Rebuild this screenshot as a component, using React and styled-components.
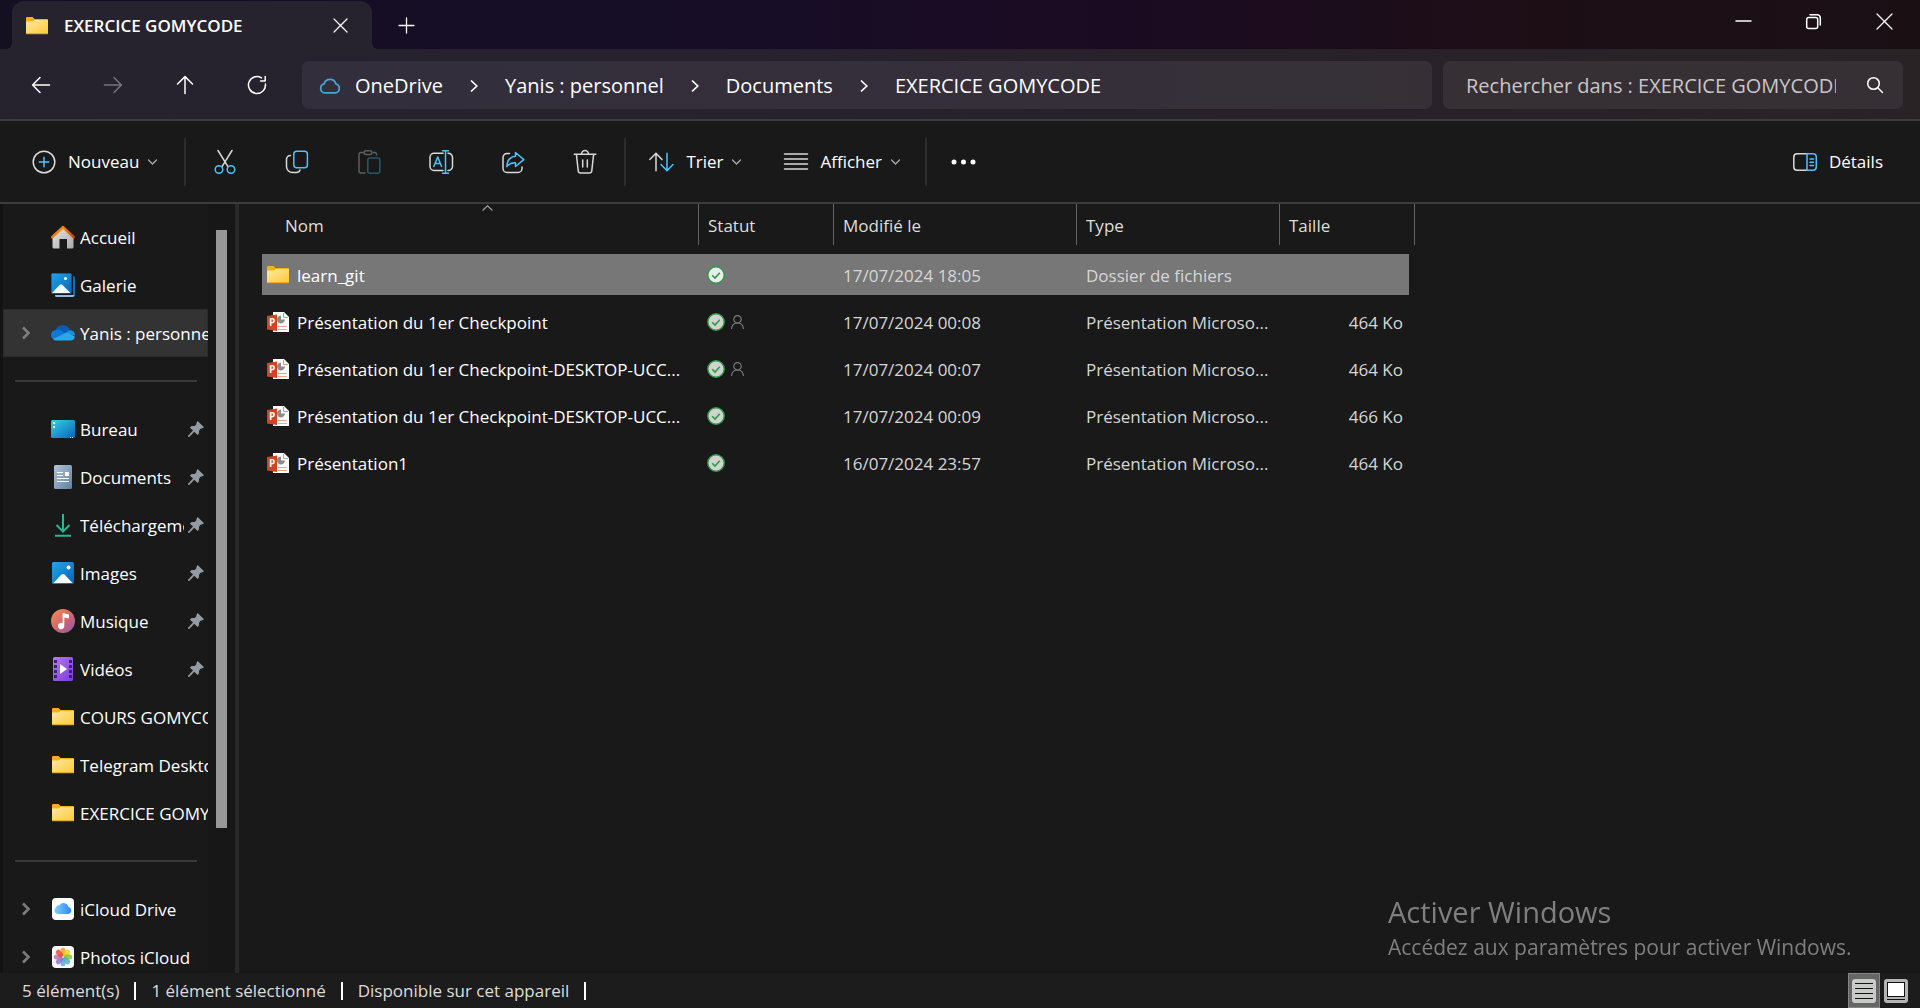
import React from "react";
import styled, { createGlobalStyle, css } from "styled-components";

const Global = createGlobalStyle`
  *, *::before, *::after { box-sizing: border-box; }
  body {
    margin: 0;
    background: #191919;
    color: #fff;
    font: 17px/24px "Open Sans", "Noto Sans", sans-serif;
  }
  button, input { font: inherit; color: inherit; border: 0; background: none; padding: 0; margin: 0; }
  button { display: inline-flex; align-items: center; justify-content: center; white-space: nowrap; }
  svg { display: block; flex: none; overflow: visible; }
`;

const BLUE = "#4cc2ff";
const LIGHT = "#d9d9d9";

/* ---------- window frame ---------- */

const Window = styled.div`
  height: 100vh;
  display: flex;
  flex-direction: column;
  overflow: hidden;
`;

const TitleBar = styled.header`
  flex: none;
  display: flex;
  height: 49px;
  padding: 1px 0 0 12px;
  background: linear-gradient(90deg, #150f22, #160d27 35%, #1b0b22 58%, #1d0e16 80%, #1a1014);
`;

const Tab = styled.div`
  position: relative;
  display: flex;
  align-items: center;
  width: 360px;
  padding: 1px 19px 0 14px;
  gap: 16px;
  border-radius: 12px 12px 0 0;
  background: #26222e;
  font-size: 17px;
  font-weight: 600;

  &::before, &::after {
    content: "";
    position: absolute;
    bottom: 0;
    width: 6px;
    height: 6px;
  }
  &::before { left: -6px; background: radial-gradient(circle at 0 0, transparent 6px, #26222e 6px); }
  &::after { right: -6px; background: radial-gradient(circle at 100% 0, transparent 6px, #26222e 6px); }
`;

const TabTitle = styled.span`
  flex: 1;
  white-space: nowrap;
`;

const GlyphButton = styled.button`
  width: ${(p) => p.$width || 26}px;
  height: ${(p) => (p.$height ? p.$height + "px" : "auto")};
`;

const NewTab = styled(GlyphButton)`
  margin-left: 17px;
`;

const Captions = styled.div`
  display: flex;
  height: 40px;
  margin-left: auto;
`;

/* ---------- navigation ---------- */

const NavBar = styled.div`
  flex: none;
  display: flex;
  align-items: center;
  height: 72px;
  padding: 2px 17px 0 5px;
  border-bottom: 2px solid #3d3b3f;
  background: linear-gradient(90deg, #26222e, #27222d 45%, #282129 70%, #2a2326);
`;

const Address = styled.nav`
  flex: 1;
  display: flex;
  align-items: center;
  height: 48px;
  margin-left: 9px;
  padding: 2px 0 0 17px;
  border-radius: 7px;
  background: linear-gradient(90deg, #322e3b, #352f3a 70%, #363036);
  font-size: 20px;
`;

const Crumb = styled.a`
  color: #fff;
  text-decoration: none;
  white-space: nowrap;
`;

const CrumbArrow = styled.svg`
  margin: 0 27px;
`;

const CloudSlot = styled.span`
  width: 36px;
`;

const Search = styled.label`
  display: flex;
  align-items: center;
  justify-content: space-between;
  width: 460px;
  height: 48px;
  margin-left: 11px;
  padding: 0 20px 0 23px;
  border-radius: 7px;
  background: #362f34;
`;

const SearchInput = styled.input`
  width: 370px;
  height: 32px;
  font-size: 20px;
  outline: 0;
  &::placeholder { color: #c9c6c9; opacity: 1; }
`;

/* ---------- command bar ---------- */

const CommandBar = styled.div`
  flex: none;
  display: flex;
  align-items: center;
  height: 83px;
  padding: 0 37px 0 32px;
  border-bottom: 2px solid #3c3c3c;
  background: #191919;
`;

const Command = styled.button`
  gap: 12px;
`;

const Label = styled.span`
  margin-right: ${(p) => (p.$last ? 0 : -3)}px;
  padding-top: 1px;
`;

const Divider = styled.span`
  width: 2px;
  height: 48px;
  margin: 0 ${(p) => p.$right}px 0 ${(p) => p.$left}px;
  background: #2d2d2d;
`;

const IconCommand = styled.button`
  width: 72px;
  height: 48px;
`;

const Spacer = styled.span`
  flex: ${(p) => (p.$width ? "none" : 1)};
  width: ${(p) => p.$width || 0}px;
`;

/* ---------- side panel ---------- */

const Body = styled.div`
  flex: 1;
  display: flex;
  min-height: 0;
`;

const SidePanel = styled.aside`
  flex: none;
  display: grid;
  grid-template-columns: 205px 27px;
  width: 239px;
  border-left: 3px solid #131313;
  border-right: 4px solid #292929;
  background: #171717;
`;

const Places = styled.nav`
  overflow: hidden;
  padding-top: 9px;
  background: #191919;
`;

const Place = styled.a`
  display: grid;
  grid-template-columns: 48px 24px 1fr auto;
  align-items: center;
  height: 48px;
  color: #fff;
  text-decoration: none;
  white-space: nowrap;
  ${(p) => p.$active && css`
    background: #333;
    box-shadow: inset 0 0 0 1px #2b2b2b;
  `}
`;

const PlaceArrow = styled.span`
  padding-left: 18px;
`;

const PlaceIcon = styled.span`
  display: flex;
  justify-content: center;
`;

const PlaceName = styled.span`
  overflow: hidden;
  margin-left: 5px;
  padding-top: 1px;
`;

const PinSlot = styled.span`
  padding: 0 4px;
`;

const Rule = styled.hr`
  height: 48px;
  margin: 0 11px 0 12px;
  border: 0;
  background: linear-gradient(#3a3a3a, #3a3a3a) center / 100% 2px no-repeat;
`;

const Track = styled.div`
  display: grid;
  grid-template-rows: 26px 598fr 145fr;
  padding: 0 8px;
`;

const Thumb = styled.div`
  grid-row: 2;
  background: #979797;
`;

/* ---------- file list ---------- */

const Content = styled.main`
  flex: 1;
  min-width: 0;
  padding-left: 23px;
`;

const Files = styled.table`
  width: 1153px;
  table-layout: fixed;
  border-collapse: separate;
  border-spacing: 0;
`;

const Col = styled.col`
  width: ${(p) => p.$width}px;
`;

const HeadCell = styled.th`
  position: relative;
  height: 47px;
  padding: 0;
  vertical-align: top;
  font-weight: 400;
`;

const HeadButton = styled.button`
  justify-content: flex-start;
  width: 100%;
  height: 41px;
  padding: 2px 0 0 ${(p) => (p.$first ? 23 : 9)}px;
  border-right: 1px solid #636363;
  color: #dedede;
`;

const SortMark = styled.svg`
  position: absolute;
  top: 1px;
  left: calc(50% + 1px);
`;

const Cell = styled.td`
  height: 47px;
  padding: ${(p) => (p.$icons ? 0 : 3)}px 6px 0 ${(p) => p.$left || 9}px;
  border: solid transparent;
  border-width: 3px 0;
  background-clip: padding-box;
  color: #d6d6d6;
  text-align: ${(p) => (p.$right ? "right" : "left")};
  white-space: nowrap;
  overflow: hidden;
`;

const Row = styled.tr`
  ${(p) => p.$selected && css`
    ${Cell} { background-color: #777; }
  `}
`;

const NameBox = styled.span`
  display: flex;
  align-items: center;
  gap: 8px;
  color: #fff;
`;

const FileName = styled.span`
  padding-top: 3px;
`;

const StatusBox = styled.span`
  display: flex;
  align-items: center;
  gap: 6px;
`;

/* ---------- bottom ---------- */

const StatusBar = styled.footer`
  flex: none;
  display: flex;
  align-items: center;
  height: 35px;
  padding: 0 8px 0 22px;
  background: #1c1c1c;
  color: #dcdcdc;
`;

const StatusItem = styled.span`
  margin-right: 15px;
  padding-right: 15px;
  line-height: 18px;
  border-right: 2px solid #fff;
`;

const ViewButton = styled.button`
  width: 32px;
  height: 35px;
  ${(p) => p.$on && css`
    background: #666;
    border: 1px solid #858585;
  `}
`;

const Watermark = styled.div`
  position: fixed;
  right: 68px;
  bottom: 46px;
  width: 464px;
  color: #7f7f7f;
  font-size: 21px;
  line-height: 30px;
  white-space: nowrap;
  pointer-events: none;
`;

const WatermarkTitle = styled.div`
  font-size: 29px;
  line-height: 40px;
`;

/* ---------- drawings ---------- */

const Stroke = ({ w = 24, h = 24, color = LIGHT, sw = 1.5, children }) => (
  <svg width={w} height={h} viewBox={`0 0 ${w} ${h}`} fill="none" stroke={color} strokeWidth={sw} strokeLinecap="round" strokeLinejoin="round" aria-hidden="true">
    {children}
  </svg>
);

const Folder = () => (
  <svg width="22" height="18" viewBox="0 0 22 18" aria-hidden="true">
    <defs>
      <linearGradient id="folder" x1="0" y1="0" x2="1" y2="1">
        <stop offset="0" stopColor="#ffe9a2" />
        <stop offset="1" stopColor="#ffc937" />
      </linearGradient>
    </defs>
    <path d="M0 1.2Q0 0 1.2 0H6.5L8.5 2H21Q22 2 22 3V16H0Z" fill="#f6b01a" />
    <path d="M0 4.4H7L8.6 3H22V16.4Q22 17 21.3 17H.7Q0 17 0 16.4Z" fill="url(#folder)" />
    <path d="M0 16.3H22V16.6Q22 17.3 21.3 17.3H.7Q0 17.3 0 16.6Z" fill="#dd9f1c" />
  </svg>
);

const ChevronDown = () => (
  <Stroke w={9} h={6} color="#b0b0b0" sw={1.2}><path d="M.5 1 4.5 5 8.5 1" /></Stroke>
);

const Close = ({ size = 13 }) => (
  <Stroke w={size} h={size} color="#fff" sw={1.3}><path d={`M0 0 ${size} ${size}M${size} 0 0 ${size}`} /></Stroke>
);

const ArrowLeft = () => <Stroke w={18} h={16} color="#fff"><path d="M17.5 8H.8M8 .5.6 8 8 15.5" /></Stroke>;
const ArrowRight = () => <Stroke w={18} h={16} color="#77747d"><path d="M.5 8H17.2M10 .5 17.4 8 10 15.5" /></Stroke>;
const ArrowUp = () => <Stroke w={16} h={18} color="#fff"><path d="M8 17.5V.8M.5 8 8 .6 15.5 8" /></Stroke>;
const Refresh = () => (
  <Stroke w={18} h={18} color="#fff"><path d="M13.5 1.8A8.5 8.5 0 1 0 17.4 8M17.2.6V5H12.6" /></Stroke>
);

const CloudLine = () => (
  <Stroke w={22} h={16} color="#4aa3d6" sw={1.7}>
    <path d="M5.5 14.8A4.6 4.6 0 0 1 5.2 5.8 6 6 0 0 1 16.8 5.8 4.6 4.6 0 0 1 16.5 14.8Z" />
  </Stroke>
);

const PlusCircle = () => (
  <Stroke><circle cx="12" cy="12" r="10.8" /><path d="M12 7.2V16.8M7.2 12H16.8" stroke={BLUE} /></Stroke>
);
const Cut = () => (
  <Stroke>
    <path d="M5 .5 14.8 16.4M19 .5 9.2 16.4" />
    <g stroke={BLUE}><circle cx="6" cy="19.5" r="3.8" /><circle cx="18" cy="19.5" r="3.8" /></g>
  </Stroke>
);
const Copy = () => (
  <Stroke>
    <path d="M5.5 5.4A4 4 0 0 0 1.5 9.3V16.5A6 6 0 0 0 7.5 22.5H11.5A3.6 3.6 0 0 0 15 20" />
    <rect x="8.8" y="1.2" width="13.6" height="16.6" rx="3" stroke={BLUE} />
  </Stroke>
);
const Paste = () => (
  <Stroke color="#5d5d5d">
    <path d="M6.5 2.4H4A2 2 0 0 0 2 4.4V21A2 2 0 0 0 4 23H8M16 2.4H18A2 2 0 0 1 19.5 4V5" />
    <rect x="7" y=".8" width="8" height="3.6" rx="1.8" />
    <rect x="10.8" y="8" width="12" height="15.2" rx="2" stroke="#27566d" />
  </Stroke>
);
const Rename = () => (
  <Stroke>
    <path d="M14 3.3H5A4 4 0 0 0 1 7.3V16.5A4 4 0 0 0 5 20.5H14M19 3.3A4.2 4.2 0 0 1 23.5 7.3V16.5A4.2 4.2 0 0 1 19 20.5" />
    <g stroke={BLUE}><path d="M16.5 .8V23.2M13.5 .8H19.5M13.5 23.2H19.5M4.8 16.5 8.7 7 12.6 16.5M6.2 13.4H11.2" /></g>
  </Stroke>
);
const Share = () => (
  <Stroke>
    <path d="M8.5 3.5H6A4 4 0 0 0 2 7.5V18.5A4 4 0 0 0 6 22.5H17A4 4 0 0 0 21 18.5V17" />
    <path d="M14.5 2.5 22.8 9.6 14.5 16.5V12.8C10.5 12.5 8 13.8 5.8 16.6 6.2 11 8.8 6.6 14.5 6.2Z" stroke={BLUE} />
  </Stroke>
);
const Trash = () => (
  <Stroke>
    <path d="M1.2 4.3H22.8M8.6 4A3.4 3.4 0 0 1 15.4 4M3.4 4.5 5.2 20.7A2.5 2.5 0 0 0 7.7 23H16.3A2.5 2.5 0 0 0 18.8 20.7L20.6 4.5M9.7 10V17M14.3 10V17" />
  </Stroke>
);
const Sort = () => (
  <Stroke w={25} h={20}>
    <path d="M7 18.8V1.2M.8 7.5 7 1.2 13 7.5" />
    <path d="M18 1.2V18.8M12 12.5 18 18.8 24 12.5" stroke={BLUE} />
  </Stroke>
);
const Lines = () => <Stroke w={24} h={17}><path d="M.5 1H23.5M.5 6H23.5M.5 11H23.5M.5 16H23.5" /></Stroke>;
const Dots = () => (
  <svg width="25" height="6" viewBox="0 0 25 6" fill="#fff" aria-hidden="true"><circle cx="3" cy="3" r="2.5" /><circle cx="12.5" cy="3" r="2.5" /><circle cx="22" cy="3" r="2.5" /></svg>
);
const DetailsPane = () => (
  <Stroke w={24} h={18}>
    <path d="M14 .8H4A3.3 3.3 0 0 0 .8 4V14A3.3 3.3 0 0 0 4 17.2H14" />
    <path d="M14 .8H20A3.3 3.3 0 0 1 23.3 4V14A3.3 3.3 0 0 1 20 17.2H14ZM17 6H20.5M17 9.2H20.5M17 12.4H20.5" stroke={BLUE} />
  </Stroke>
);

const Pin = () => (
  <svg width="16" height="16" viewBox="0 0 16 16" aria-hidden="true">
    <path d="M9.6 0 16 6.2C14.8 7.2 13.8 7.4 12.6 7.8L11 9.8C11.3 11.5 11 13 9.8 14L6.2 10.8 1.5 15.8 0 16 .3 14.5 5 9.6 1.8 6.4C3 5.2 4.5 4.8 6.2 5.2L8.4 3.4C8.5 2 8.8 1 9.6 0Z" fill="#949da4" />
  </svg>
);
const SideChevron = () => <Stroke w={10} h={14} color="#7d7d7d" sw={2.6}><path d="M2 1.5 7.5 7 2 12.5" strokeLinecap="butt" strokeLinejoin="miter" /></Stroke>;

const Home = () => (
  <svg width="24" height="24" viewBox="0 0 24 24" aria-hidden="true">
    <defs>
      <linearGradient id="wall" x1="0" y1="0" x2="1" y2="1"><stop offset="0" stopColor="#e6e6e6" /><stop offset="1" stopColor="#aaa" /></linearGradient>
      <linearGradient id="roof"><stop offset="0" stopColor="#ee7a10" /><stop offset=".5" stopColor="#f58a1a" /><stop offset="1" stopColor="#c93f06" /></linearGradient>
    </defs>
    <path d="M1.5 11 12 2 22.5 11V22Q22.5 23.5 21 23.5H16V14H8.5V23.5H3Q1.5 23.5 1.5 22Z" fill="url(#wall)" />
    <path d="M1.3 12 12 2.2 22.7 12" fill="none" stroke="url(#roof)" strokeWidth="2.6" strokeLinecap="round" strokeLinejoin="round" />
  </svg>
);
const Sky = () => (
  <linearGradient id="sky" x1="0" y1="0" x2="1" y2="1"><stop offset="0" stopColor="#22a5ea" /><stop offset="1" stopColor="#0862b8" /></linearGradient>
);
const Gallery = () => (
  <svg width="24" height="24" viewBox="0 0 24 24" aria-hidden="true">
    <defs><Sky /></defs>
    <path d="M22 3Q24 3 24 5V22Q24 24 22 24H5Q4 24 4 22H22Z" fill="#0f6cbd" />
    <path d="M4 22H23.5Q23 24 21.5 24H5.5Q4 24 4 22Z" fill="#8fbcf0" />
    <rect width="21" height="21" rx="1.5" fill="url(#sky)" stroke="#191919" strokeWidth=".8" />
    <path d="M1 20 8.5 12Q10 10.7 11.5 12L19.5 20Z" fill="#f2f9ff" />
    <circle cx="14.5" cy="5.5" r="1.6" fill="#fff" />
  </svg>
);
const Pictures = () => (
  <svg width="22" height="22" viewBox="0 0 22 22" aria-hidden="true">
    <defs><Sky /></defs>
    <rect width="22" height="22" rx="1.5" fill="url(#sky)" />
    <path d="M1.5 21 9.5 12.6Q11 11.3 12.5 12.6L20.5 21Z" fill="#fff" />
    <circle cx="16.5" cy="5.5" r="2" fill="#fff" />
  </svg>
);
const OneDrive = () => (
  <svg width="24" height="16" viewBox="0 0 24 16" aria-hidden="true">
    <path d="M4.5 5.5A7.6 7.6 0 0 1 19 5.5L13 10Z" fill="#0a5cb8" />
    <path d="M5 15A5 5 0 0 1 4.8 5 7 7 0 0 1 10 5.5L15 9 8 15Z" fill="#0f78d4" />
    <path d="M13 8.5 18.5 5.2A5 5 0 0 1 24 10.5Z" fill="#1490df" />
    <path d="M2 14 14 8.3Q16 7.5 18 8.3L23.8 11.5A4.5 4.5 0 0 1 19.5 15.5H5Q3.2 15.5 2 14Z" fill="#28a8ea" />
  </svg>
);
const Desktop = () => (
  <svg width="24" height="18" viewBox="0 0 24 18" aria-hidden="true">
    <defs><linearGradient id="desk" x1="0" y1="0" x2="1" y2="1"><stop offset="0" stopColor="#34d3e3" /><stop offset="1" stopColor="#0a63b8" /></linearGradient></defs>
    <rect width="24" height="18" rx="1.5" fill="url(#desk)" />
    <path d="M2 2H4V4H2ZM2 6H4V8H2ZM19 17H20V18H19ZM21 17H22V18H21Z" fill="#fff" />
  </svg>
);
const Documents = () => (
  <svg width="18" height="24" viewBox="0 0 18 24" aria-hidden="true">
    <defs><linearGradient id="doc" x1="0" y1="0" x2="1" y2="1"><stop offset="0" stopColor="#b3c4d8" /><stop offset="1" stopColor="#5f80a4" /></linearGradient></defs>
    <rect width="18" height="24" rx="1.5" fill="url(#doc)" />
    <path d="M3 7H9V8H3ZM3 10H9V11H3ZM3 13H15V14H3ZM3 16H15V17H3ZM11 7H15V11H11Z" fill="#fff" />
  </svg>
);
const Download = () => (
  <svg width="16" height="23" viewBox="0 0 16 23" fill="none" stroke="#27b893" strokeWidth="2" aria-hidden="true">
    <path d="M8 0V17M1.5 11 8 17.6 14.5 11M0 21.8H16" />
  </svg>
);
const Music = () => (
  <svg width="24" height="24" viewBox="0 0 24 24" aria-hidden="true">
    <defs><linearGradient id="music" x1="0" y1="0" x2="1" y2="1"><stop offset="0" stopColor="#f5924c" /><stop offset=".55" stopColor="#cf6470" /><stop offset="1" stopColor="#8d59b8" /></linearGradient></defs>
    <circle cx="12" cy="12" r="12" fill="url(#music)" />
    <path d="M11.6 4 18 5.5V9.5L13.3 8.4V17A3.2 3.2 0 1 1 11.6 14.2Z" fill="#fff" />
  </svg>
);
const Video = () => (
  <svg width="20" height="24" viewBox="0 0 20 24" aria-hidden="true">
    <defs><linearGradient id="video" x1="0" y1="0" x2="1" y2="1"><stop offset="0" stopColor="#b779f2" /><stop offset="1" stopColor="#7a3be0" /></linearGradient></defs>
    <rect width="20" height="24" rx="1.5" fill="url(#video)" />
    {[3, 8, 13, 18].map((y) => <path key={y} d={`M1 ${y}H4V${y + 3}H1ZM16 ${y}H19V${y + 3}H16Z`} fill="#3d2070" />)}
    <path d="M7 7 14 12 7 17Z" fill="#fff" />
  </svg>
);
const ICloud = () => (
  <svg width="22" height="22" viewBox="0 0 22 22" aria-hidden="true">
    <defs><linearGradient id="icloud"><stop offset="0" stopColor="#7fd0f8" /><stop offset="1" stopColor="#2f86f5" /></linearGradient></defs>
    <rect width="22" height="22" rx="4" fill="#fff" />
    <path d="M5.5 16A3.5 3.5 0 0 1 4 9.6 3.2 3.2 0 0 1 7.5 7.2 5 5 0 0 1 16.5 9 3.6 3.6 0 0 1 16.5 16Z" fill="url(#icloud)" />
  </svg>
);
const PETALS = ["#f9a01b", "#e8d51a", "#8cc63f", "#4fb9a0", "#5aa4e6", "#8a78c8", "#c472b4", "#ee4a38"];
const Photos = () => (
  <svg width="22" height="22" viewBox="0 0 22 22" aria-hidden="true">
    <rect width="22" height="22" rx="4" fill="#fafafa" />
    {PETALS.map((c, i) => <rect key={c} x="8.5" y="1.8" width="5" height="8.4" rx="2.5" fill={c} opacity=".85" transform={`rotate(${i * 45} 11 11)`} />)}
  </svg>
);

const PowerPoint = () => (
  <svg width="22" height="20" viewBox="0 0 22 20" aria-hidden="true">
    <path d="M6 0H17L22 5V20H6Z" fill="#fff" />
    <path d="M16.5 1V5.5H21" fill="none" stroke="#c9a08e" />
    <path d="M14 3.5V7.5H18A4 4 0 1 1 11 4.8Q12 3.7 14 3.5Z" fill="#8c8c8c" />
    <path d="M11 14.5H20M11 17.5H20" stroke="#f0a58a" />
    <path d="M0 4 10 2.5V19L0 17.5Z" fill="#d04423" />
    <text x="2" y="14" fill="#fff" fontSize="10" fontWeight="700" fontFamily="Open Sans, sans-serif">P</text>
  </svg>
);
const Synced = ({ bright }) => (
  <svg width="18" height="18" viewBox="0 0 18 18" aria-hidden="true">
    <circle cx="9" cy="9" r="8.2" fill={bright ? "#ececec" : "#d2d2d2"} stroke="#2b9c41" strokeWidth="1.4" />
    <path d="M5.2 9.2 8 12 12.8 6.8" fill="none" stroke="#2b9c41" strokeWidth="1.6" />
  </svg>
);
const Person = () => (
  <Stroke w={13} h={14} color="#7c7c7c" sw={1.2}><circle cx="6.5" cy="4.3" r="3.7" /><path d="M.6 13.5C1 9.8 3.5 8 6.5 8S12 9.8 12.4 13.5" /></Stroke>
);

/* ---------- data ---------- */

const PLACES = [
  { name: "Accueil", Icon: Home },
  { name: "Galerie", Icon: Gallery },
  { name: "Yanis : personnel", Icon: OneDrive, arrow: true, active: true },
  null,
  { name: "Bureau", Icon: Desktop, pin: true },
  { name: "Documents", Icon: Documents, pin: true },
  { name: "Téléchargements", Icon: Download, pin: true },
  { name: "Images", Icon: Pictures, pin: true },
  { name: "Musique", Icon: Music, pin: true },
  { name: "Vidéos", Icon: Video, pin: true },
  { name: "COURS GOMYCODE", Icon: Folder },
  { name: "Telegram Desktop", Icon: Folder },
  { name: "EXERCICE GOMYCODE", Icon: Folder },
  null,
  { name: "iCloud Drive", Icon: ICloud, arrow: true },
  { name: "Photos iCloud", Icon: Photos, arrow: true },
];

const PPT = "Présentation Microso...";
const FILES = [
  { name: "learn_git", Icon: Folder, date: "17/07/2024 18:05", type: "Dossier de fichiers", size: "", selected: true },
  { name: "Présentation du 1er Checkpoint", Icon: PowerPoint, shared: true, date: "17/07/2024 00:08", type: PPT, size: "464 Ko" },
  { name: "Présentation du 1er Checkpoint-DESKTOP-UCC...", Icon: PowerPoint, shared: true, date: "17/07/2024 00:07", type: PPT, size: "464 Ko" },
  { name: "Présentation du 1er Checkpoint-DESKTOP-UCC...", Icon: PowerPoint, date: "17/07/2024 00:09", type: PPT, size: "466 Ko" },
  { name: "Présentation1", Icon: PowerPoint, date: "16/07/2024 23:57", type: PPT, size: "464 Ko" },
];

const CRUMBS = ["OneDrive", "Yanis : personnel", "Documents", "EXERCICE GOMYCODE"];

const TOOLS = [
  ["Couper", Cut], ["Copier", Copy], ["Coller", Paste], ["Renommer", Rename], ["Partager", Share], ["Supprimer", Trash],
];

export default function App() {
  return (
    <Window>
      <Global />
      <TitleBar>
        <Tab>
          <Folder />
          <TabTitle>EXERCICE GOMYCODE</TabTitle>
          <GlyphButton aria-label="Fermer l'onglet"><Close /></GlyphButton>
        </Tab>
        <NewTab $width={34} aria-label="Nouvel onglet">
          <Stroke w={15} h={15} color="#fff" sw={1.3}><path d="M7.5 0V15M0 7.5H15" /></Stroke>
        </NewTab>
        <Captions>
          <GlyphButton $width={70} $height={40} aria-label="Réduire">
            <Stroke w={15} h={2} color="#fff"><path d="M0 1H15" /></Stroke>
          </GlyphButton>
          <GlyphButton $width={70} $height={40} aria-label="Restaurer">
            <Stroke w={15} h={15} color="#fff"><rect x=".7" y="3.5" width="11" height="11" rx="2" /><path d="M4 .8H11A3.3 3.3 0 0 1 14.3 4V11" /></Stroke>
          </GlyphButton>
          <GlyphButton $width={72} $height={40} aria-label="Fermer"><Close size={15} /></GlyphButton>
        </Captions>
      </TitleBar>

      <NavBar>
        <GlyphButton $width={72} $height={48} aria-label="Précédent"><ArrowLeft /></GlyphButton>
        <GlyphButton $width={72} $height={48} aria-label="Suivant"><ArrowRight /></GlyphButton>
        <GlyphButton $width={72} $height={48} aria-label="Dossier parent"><ArrowUp /></GlyphButton>
        <GlyphButton $width={72} $height={48} aria-label="Actualiser"><Refresh /></GlyphButton>
        <Address>
          <CloudSlot><CloudLine /></CloudSlot>
          {CRUMBS.map((c, i) => (
            <React.Fragment key={c}>
              {i > 0 && (
                <CrumbArrow width="8" height="12" viewBox="0 0 8 12" fill="none" stroke="#fff" strokeWidth="1.7"><path d="M1 .5 6.8 6 1 11.5" /></CrumbArrow>
              )}
              <Crumb href="#">{c}</Crumb>
            </React.Fragment>
          ))}
        </Address>
        <Search>
          <SearchInput type="text" aria-label="Rechercher" placeholder="Rechercher dans : EXERCICE GOMYCODE" />
          <Stroke w={16} h={16} color="#fff"><circle cx="6.5" cy="6.5" r="5.8" /><path d="M10.8 10.8 15.5 15.5" /></Stroke>
        </Search>
      </NavBar>

      <CommandBar>
        <Command><PlusCircle /><Label>Nouveau</Label><ChevronDown /></Command>
        <Divider $left={27} $right={3} />
        {TOOLS.map(([name, Icon]) => (
          <IconCommand key={name} aria-label={name} disabled={name === "Coller"}><Icon /></IconCommand>
        ))}
        <Divider $left={3} $right={23} />
        <Command><Sort /><Label>Trier</Label><ChevronDown /></Command>
        <Spacer $width={43} />
        <Command><Lines /><Label>Afficher</Label><ChevronDown /></Command>
        <Divider $left={25} $right={0} />
        <IconCommand aria-label="Plus d'options"><Dots /></IconCommand>
        <Spacer />
        <Command><DetailsPane /><Label $last>Détails</Label></Command>
      </CommandBar>

      <Body>
        <SidePanel>
          <Places>
            {PLACES.map((p, i) =>
              p ? (
                <Place key={p.name} href="#" $active={p.active}>
                  <PlaceArrow>{p.arrow && <SideChevron />}</PlaceArrow>
                  <PlaceIcon><p.Icon /></PlaceIcon>
                  <PlaceName>{p.name}</PlaceName>
                  {p.pin && <PinSlot><Pin /></PinSlot>}
                </Place>
              ) : (
                <Rule key={i} />
              )
            )}
          </Places>
          <Track><Thumb /></Track>
        </SidePanel>

        <Content>
          <Files>
            <colgroup>
              <Col $width={437} /><Col $width={135} /><Col $width={243} /><Col $width={203} /><Col $width={129} /><Col $width={6} />
            </colgroup>
            <thead>
              <tr>
                <HeadCell>
                  <HeadButton $first>Nom</HeadButton>
                  <SortMark width="11" height="6" viewBox="0 0 11 6" fill="none" stroke="#a0a0a0" strokeWidth="1.2"><path d="M.5 5.5 5.5.8 10.5 5.5" /></SortMark>
                </HeadCell>
                <HeadCell><HeadButton>Statut</HeadButton></HeadCell>
                <HeadCell><HeadButton>Modifié le</HeadButton></HeadCell>
                <HeadCell><HeadButton>Type</HeadButton></HeadCell>
                <HeadCell colSpan={2}><HeadButton>Taille</HeadButton></HeadCell>
              </tr>
            </thead>
            <tbody>
              {FILES.map((f, i) => (
                <Row key={i} $selected={f.selected}>
                  <Cell $icons $left={5}><NameBox><f.Icon /><FileName>{f.name}</FileName></NameBox></Cell>
                  <Cell $icons $left={8}><StatusBox><Synced bright={f.selected} />{f.shared && <Person />}</StatusBox></Cell>
                  <Cell>{f.date}</Cell>
                  <Cell>{f.type}</Cell>
                  <Cell $right>{f.size}</Cell>
                </Row>
              ))}
            </tbody>
          </Files>
        </Content>
      </Body>

      <StatusBar>
        <StatusItem>5 élément(s)</StatusItem>
        <StatusItem>1 élément sélectionné</StatusItem>
        <StatusItem>Disponible sur cet appareil</StatusItem>
        <Spacer />
        <ViewButton $on aria-label="Détails">
          <svg width="24" height="24" viewBox="0 0 24 24"><rect width="24" height="24" rx="3" fill="#c8cac7" /><path d="M3 4.5H21M3 9.5H21M3 14.5H21M3 19.5H21" stroke="#111" /></svg>
        </ViewButton>
        <ViewButton aria-label="Grandes icônes">
          <svg width="24" height="24" viewBox="0 0 24 24"><rect width="24" height="24" rx="3" fill="#b5b5b5" /><rect x="3.5" y="3.5" width="17" height="14" fill="#fff" stroke="#111" /><path d="M3 20.5H21" stroke="#111" /></svg>
        </ViewButton>
      </StatusBar>

      <Watermark>
        <WatermarkTitle>Activer Windows</WatermarkTitle>
        Accédez aux paramètres pour activer Windows.
      </Watermark>
    </Window>
  );
}
